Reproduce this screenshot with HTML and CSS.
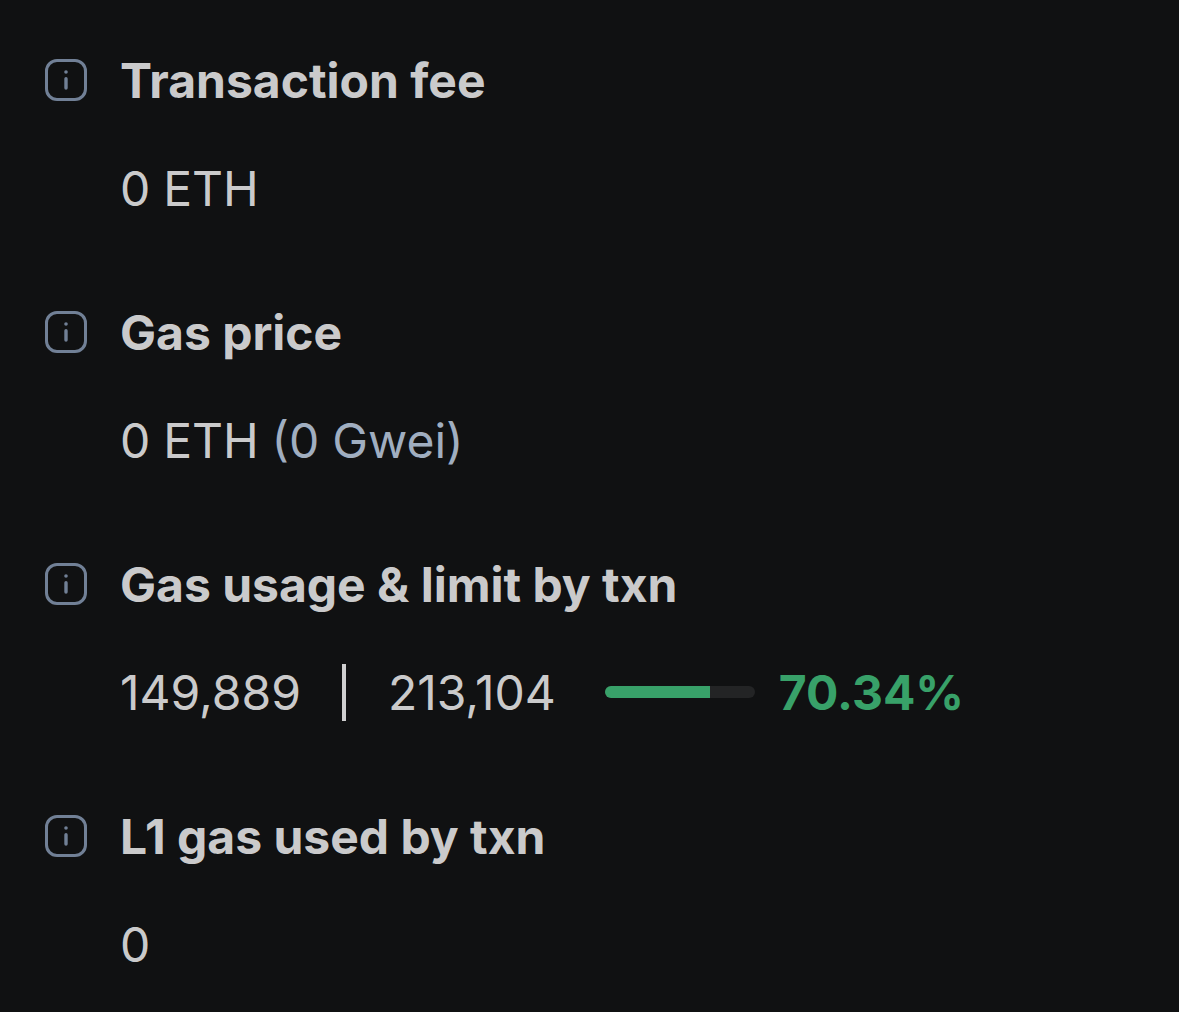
FILE: index.html
```html
<!DOCTYPE html>
<html lang="en">
<head>
<meta charset="utf-8">
<title>Transaction details</title>
<link rel="stylesheet" href="styles.css">
</head>
<body>
<svg class="defs" aria-hidden="true">
  <symbol id="info" viewBox="0 0 42 42">
    <rect x="1.5" y="1.5" width="39" height="39" rx="10.5" fill="none" stroke="currentColor" stroke-width="3"/>
    <circle cx="21" cy="13" r="1.8" fill="currentColor"/>
    <path d="M21 19.7V29" fill="none" stroke="currentColor" stroke-width="3.4" stroke-linecap="round"/>
  </symbol>
</svg>
<dl class="details">
  <div class="item">
    <svg class="icon"><use href="#info"/></svg>
    <dt class="label">Transaction fee</dt>
    <dd class="value">0 ETH</dd>
  </div>
  <div class="item">
    <svg class="icon"><use href="#info"/></svg>
    <dt class="label">Gas price</dt>
    <dd class="value">0 ETH <span class="secondary">(0 Gwei)</span></dd>
  </div>
  <div class="item">
    <svg class="icon"><use href="#info"/></svg>
    <dt class="label">Gas usage &amp; limit by txn</dt>
    <dd class="value usage">
      <span>149,889</span>
      <span class="separator"></span>
      <span>213,104</span>
      <span class="track"><span class="fill" style="width: 70.34%"></span></span>
      <span class="percent">70.34%</span>
    </dd>
  </div>
  <div class="item">
    <svg class="icon"><use href="#info"/></svg>
    <dt class="label">L1 gas used by txn</dt>
    <dd class="value">0</dd>
  </div>
</dl>
</body>
</html>
```
FILE: styles.css
```css
* { box-sizing: border-box; }
body {
  margin: 0;
  min-height: 1012px;
  background: #101112;
  color: rgba(255, 255, 255, 0.8);
  font: 400 48px/72px Inter, sans-serif;
}
.defs { display: none; }
.details {
  display: grid;
  gap: 72px;
  margin: 0;
  padding: 45px 0 0 45px;
}
.item {
  display: grid;
  grid-template-columns: 42px 1fr;
  column-gap: 33px;
  row-gap: 36px;
  height: 180px;
}
.icon {
  width: 42px;
  height: 42px;
  margin-top: 14px;
  color: #718096;
}
.label { font-weight: 700; white-space: nowrap; }
.value { grid-column: 2; margin: 0; white-space: nowrap; word-spacing: -0.6px; }
.secondary { color: #a0aec0; }
.usage { display: flex; align-items: center; }
.separator {
  width: 4px;
  height: 57px;
  margin: -2px 42px 0 41px;
  background: #cfcfd0;
}
.track {
  width: 150px;
  height: 12px;
  margin: -2px 24px 0 49px;
  border-radius: 6px;
  overflow: hidden;
  background: #232425;
}
.fill { display: block; height: 100%; background: #38a169; }
.percent { color: #38a169; font-weight: 700; }
```
